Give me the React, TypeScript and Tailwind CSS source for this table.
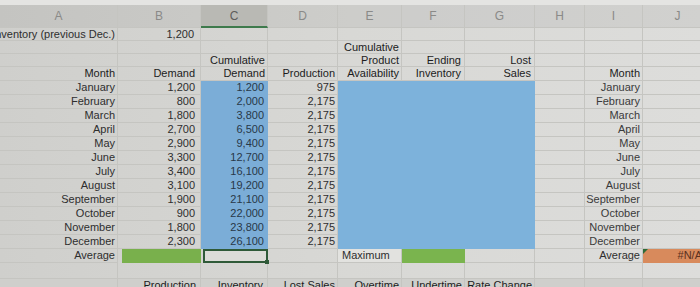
import React from 'react';

const COLS = 'grid grid-cols-[118px_83px_67px_70px_64px_63px_70px_50px_58px_70px]';

const months = ['January', 'February', 'March', 'April', 'May', 'June', 'July', 'August', 'September', 'October', 'November', 'December'];
const demand = ['1,200', '800', '1,800', '2,700', '2,900', '3,300', '3,400', '3,100', '1,900', '900', '1,800', '2,300'];
const cumDemand = ['1,200', '2,000', '3,800', '6,500', '9,400', '12,700', '16,100', '19,200', '21,100', '22,000', '23,800', '26,100'];
const production = ['975', '2,175', '2,175', '2,175', '2,175', '2,175', '2,175', '2,175', '2,175', '2,175', '2,175', '2,175'];

type CellProps = { children?: React.ReactNode; className?: string; line?: string };

function Cell({ children, className = '', line = 'border-[#c5c5c1]' }: CellProps) {
  return (
    <div className={`flex items-center overflow-hidden whitespace-nowrap leading-none border-r border-b ${line} ${className}`}>
      {children}
    </div>
  );
}

// right aligned text cell
function R({ children, className = '', line }: CellProps) {
  return (
    <Cell className={`justify-end pr-[2px] ${className}`} line={line}>
      {children}
    </Cell>
  );
}

export default function App() {
  const letters = ['A', 'B', 'C', 'D', 'E', 'F', 'G', 'H', 'I', 'J'];

  return (
    <div
      className="w-[700px] h-[287px] overflow-hidden bg-linear-to-r from-[#cfcfcc] via-[#d8d8d5] to-[#dddddb] text-[11px] text-[#2e2e2e]"
      style={{ fontFamily: '"Liberation Sans", Arial, sans-serif' }}
    >
      <div className="h-[5px] bg-[#e4e4e2]" />

      {/* column letters */}
      <div className={`${COLS} h-[23px] bg-black/5`}>
        {letters.map((l) =>
          l === 'C' ? (
            <div key={l} className="flex items-center justify-center text-[12px] text-[#5d5d5b] bg-[#b9b9b4] border-r border-[#c5c5c1] border-b-2 border-b-[#3e7a4c]">
              {l}
            </div>
          ) : (
            <div key={l} className="flex items-center justify-center text-[12px] text-[#8a8a88] border-r border-b border-[#c5c5c1]">
              {l}
            </div>
          )
        )}
      </div>

      {/* beginning inventory */}
      <div className={`${COLS} h-[13px]`}>
        <R>Beginning Inventory (previous Dec.)</R>
        <R className="pr-[6px]">1,200</R>
        <Cell /><Cell /><Cell /><Cell /><Cell /><Cell /><Cell /><Cell />
      </div>

      <div className={`${COLS} h-[13px] text-[#1c1c1c]`}>
        <Cell /><Cell /><Cell /><Cell />
        <R>Cumulative</R>
        <Cell /><Cell /><Cell /><Cell /><Cell />
      </div>

      <div className={`${COLS} h-[13px] text-[#1c1c1c]`}>
        <Cell /><Cell />
        <R>Cumulative</R>
        <Cell />
        <R>Product</R>
        <R className="pr-[3px]">Ending</R>
        <R className="pr-[3px]">Lost</R>
        <Cell /><Cell /><Cell />
      </div>

      <div className={`${COLS} h-[14px] text-[#1c1c1c]`}>
        <R>Month</R>
        <R className="pr-[5px]">Demand</R>
        <R>Demand</R>
        <R>Production</R>
        <R>Availability</R>
        <R className="pr-[3px]">Inventory</R>
        <R className="pr-[3px]">Sales</R>
        <Cell />
        <R>Month</R>
        <Cell />
      </div>

      {months.map((m, i) => (
        <div key={m} className={`${COLS} h-[14px]`}>
          <R>{m}</R>
          <R className="pr-[5px]">{demand[i]}</R>
          <R className="bg-[#7badd7] pr-[3px] text-[#283848]" line="border-[#7badd7]">{cumDemand[i]}</R>
          <R>{production[i]}</R>
          <Cell className="bg-[#7db2db]" line="border-[#7db2db]" />
          <Cell className="bg-[#7db2db]" line="border-[#7db2db]" />
          <Cell className="bg-[#7db2db]" line="border-[#7db2db]" />
          <Cell />
          <R className="text-[#3a3a3a]">{m}</R>
          <Cell />
        </div>
      ))}

      {/* averages */}
      <div className={`${COLS} h-[14px]`}>
        <R>Average</R>
        <Cell className="bg-[#79b04c] ml-[4px]" line="border-[#79b04c]" />
        <div className="relative border-2 border-[#2f5a38] bg-[#dcdcd8] ml-[2px]">
          <div className="absolute -right-[3px] -bottom-[3px] w-[4px] h-[4px] bg-[#2f5a38]" />
        </div>
        <Cell />
        <Cell className="pl-[4px] bg-[#e2e2df]">Maximum</Cell>
        <Cell className="bg-[#7ab44e]" line="border-[#7ab44e]" />
        <Cell />
        <Cell />
        <R>Average</R>
        <R className="relative bg-[#d88a5c] text-[#5a3020] pr-[10px]" line="border-[#d88a5c]">
          <span className="absolute left-0 top-0 w-0 h-0 border-t-[5px] border-r-[5px] border-t-[#2f6a36] border-r-transparent" />
          #N/A
        </R>
      </div>

      <div className={`${COLS} h-[16px]`}>
        <Cell /><Cell /><Cell /><Cell /><Cell /><Cell /><Cell /><Cell /><Cell /><Cell />
      </div>

      <div className={`${COLS} h-[14px] text-[#1c1c1c] bg-[#cfcfcc]`}>
        <Cell />
        <R className="pr-[4px]">Production</R>
        <R className="pr-[4px]">Inventory</R>
        <R>Lost Sales</R>
        <R>Overtime</R>
        <R>Undertime</R>
        <R>Rate Change</R>
        <Cell /><Cell /><Cell />
      </div>
    </div>
  );
}
